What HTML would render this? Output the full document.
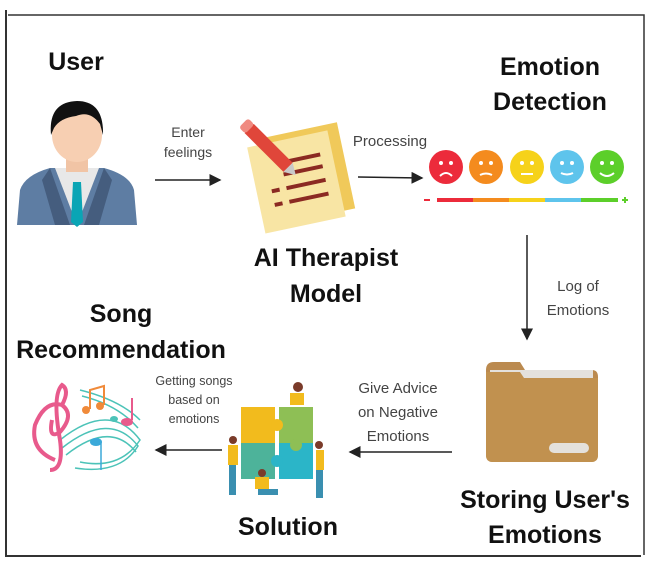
<!DOCTYPE html>
<html><head><meta charset="utf-8"><style>
body{margin:0;background:#fff;width:649px;height:567px;overflow:hidden;position:relative;font-family:"Liberation Sans",sans-serif}
.t{position:absolute;font-weight:bold;font-size:25px;color:#111;text-align:center;white-space:nowrap;line-height:1}
.s{position:absolute;font-size:14px;color:#444;text-align:center;white-space:nowrap;line-height:1.45}
</style></head><body>
<svg width="649" height="567" style="position:absolute;left:0;top:0">
<defs><marker id="a" markerWidth="8" markerHeight="8" refX="7" refY="4" orient="auto"><path d="M0,0 L8,4 L0,8z" fill="#222"/></marker></defs>
<path d="M6,10 V556 H641" stroke="#333" stroke-width="2" fill="none"/>
<path d="M8,15 H644 V555" stroke="#333" stroke-width="1.5" fill="none"/>
<line x1="155" y1="180" x2="220" y2="180" stroke="#222" stroke-width="1.5" marker-end="url(#a)"/>
<line x1="358" y1="177" x2="422" y2="178" stroke="#222" stroke-width="1.5" marker-end="url(#a)"/>
<line x1="527" y1="235" x2="527" y2="339" stroke="#222" stroke-width="1.5" marker-end="url(#a)"/>
<line x1="452" y1="452" x2="350" y2="452" stroke="#222" stroke-width="1.5" marker-end="url(#a)"/>
<line x1="222" y1="450" x2="156" y2="450" stroke="#222" stroke-width="1.5" marker-end="url(#a)"/>
<path d="M17,225 L20,190 Q25,175 50,168 L104,168 Q130,175 134,190 L137,225Z" fill="#5e7da3"/>
<path d="M55,168 L77,225 L99,168Z" fill="#e8e8e8"/>
<path d="M50,168 L70,225 L55,225 L42,180Z M104,168 L84,225 L99,225 L112,180Z" fill="#455d7e"/>
<path d="M73,182 L81,182 L83,222 L77,227 L71,222Z" fill="#0aa5b5"/>
<rect x="66" y="150" width="22" height="22" fill="#f1c4a5"/>
<ellipse cx="77" cy="135" rx="25" ry="27" fill="#f7cfb2"/>
<path d="M51,135 Q48,102 77,101 Q104,101 103,135 L100,124 Q90,110 76,116 Q60,118 54,128Z" fill="#111"/>
<g transform="rotate(-12 296 180)">
<rect x="268" y="132" width="80" height="88" fill="#f0c95a"/>
<rect x="255" y="138" width="82" height="88" fill="#f8e5a4"/>
<g stroke="#8b2a22" stroke-width="4"><line x1="285" y1="160" x2="325" y2="160"/><line x1="285" y1="172" x2="325" y2="172"/><line x1="270" y1="186" x2="278" y2="186"/><line x1="285" y1="186" x2="325" y2="186"/><line x1="270" y1="200" x2="278" y2="200"/><line x1="285" y1="200" x2="325" y2="200"/></g>
</g>
<g transform="rotate(45 270 150)"><rect x="240" y="143" width="55" height="13" fill="#e0463a"/><rect x="232" y="143" width="9" height="13" rx="3" fill="#f08a80"/><path d="M295,143 L306,149.5 L295,156Z" fill="#c9c9c9"/></g>
<g>
<circle cx="446" cy="167" r="17" fill="#ec2b3b"/><circle cx="486" cy="167" r="17" fill="#f48b1e"/><circle cx="527" cy="167" r="17" fill="#f6d21a"/><circle cx="567" cy="167" r="17" fill="#5ec4ec"/><circle cx="607" cy="167" r="17" fill="#5ccf2a"/>
<g fill="#fff"><circle cx="441" cy="163" r="2"/><circle cx="451" cy="163" r="2"/><circle cx="481" cy="163" r="2"/><circle cx="491" cy="163" r="2"/><circle cx="522" cy="163" r="2"/><circle cx="532" cy="163" r="2"/><circle cx="562" cy="163" r="2"/><circle cx="572" cy="163" r="2"/><circle cx="602" cy="163" r="2"/><circle cx="612" cy="163" r="2"/></g>
<g stroke="#fff" stroke-width="2" fill="none"><path d="M440,176 Q446,170 452,176"/><path d="M480,175 Q486,172 492,175"/><path d="M521,174 H533"/><path d="M561,173 Q567,176 573,173"/><path d="M600,173 Q607,179 614,173"/></g>
<rect x="437" y="198" width="36" height="4" fill="#ec2b3b"/><rect x="473" y="198" width="36" height="4" fill="#f48b1e"/><rect x="509" y="198" width="36" height="4" fill="#f6d21a"/><rect x="545" y="198" width="36" height="4" fill="#5ec4ec"/><rect x="581" y="198" width="37" height="4" fill="#5ccf2a"/>
<rect x="424" y="199" width="6" height="2" fill="#ec2b3b"/><path d="M622,200 h6 M625,197 v6" stroke="#5ccf2a" stroke-width="2"/>
</g>
<path d="M486,370 Q486,362 494,362 L520,362 L525,370 L592,370 Q598,370 598,377 L598,455 Q598,462 591,462 L493,462 Q486,462 486,455Z" fill="#bb8a4f"/>
<rect x="490" y="370" width="103" height="8" fill="#e4e1dc"/>
<path d="M524,378 L598,378 L598,455 Q598,462 591,462 L493,462 Q486,462 486,455 L486,372 L520,372Z" fill="#c1914f"/>
<rect x="549" y="443" width="40" height="10" rx="5" fill="#e4e1dc"/>
<g fill="none" stroke="#4cc3b8" stroke-width="1.5">
<path d="M60,440 Q110,400 140,440 Q120,470 80,462"/><path d="M62,448 Q110,410 138,446 Q120,475 75,468"/><path d="M66,455 Q110,420 136,452"/><path d="M80,390 Q120,400 140,420"/><path d="M82,396 Q118,405 138,428"/>
</g>
<path d="M55,460 Q30,450 35,425 Q45,400 62,405 Q75,415 60,432 Q48,440 52,420 M62,405 Q70,390 62,385 Q52,395 60,440 Q64,470 50,470" stroke="#e85a8c" stroke-width="4" fill="none"/>
<path d="M90,409 L90,390 L104,386 L104,405" stroke="#f08a3a" stroke-width="2" fill="none"/><circle cx="86" cy="410" r="4" fill="#f08a3a"/><circle cx="100" cy="406" r="4" fill="#f08a3a"/>
<path d="M132,420 L132,398" stroke="#e85a8c" stroke-width="2"/><ellipse cx="127" cy="422" rx="6" ry="4" fill="#e85a8c"/>
<ellipse cx="96" cy="442" rx="6" ry="4" fill="#3ba9d9"/><path d="M101,442 V470" stroke="#3ba9d9" stroke-width="1.5"/>
<ellipse cx="114" cy="419" rx="4" ry="3" fill="#4cc3b8"/>
<rect x="241" y="407" width="34" height="36" fill="#f2bb1d"/><rect x="279" y="407" width="34" height="36" fill="#8ebf55"/>
<rect x="241" y="443" width="34" height="36" fill="#4db39a"/><rect x="279" y="443" width="34" height="36" fill="#2bb5c8"/>
<circle cx="277" cy="425" r="6" fill="#f2bb1d"/><circle cx="296" cy="445" r="6" fill="#8ebf55"/><circle cx="277" cy="461" r="6" fill="#2bb5c8"/>
<g fill="#f2bb1d"><rect x="290" y="393" width="14" height="12"/><rect x="228" y="445" width="10" height="20"/><rect x="316" y="450" width="8" height="20"/><rect x="255" y="477" width="14" height="12"/></g>
<g fill="#3a8fb0"><rect x="229" y="465" width="7" height="30"/><rect x="316" y="470" width="7" height="28"/><rect x="258" y="489" width="20" height="6"/></g>
<g fill="#7a3b2a"><circle cx="298" cy="387" r="5"/><circle cx="233" cy="440" r="4"/><circle cx="319" cy="445" r="4"/><circle cx="262" cy="473" r="4"/></g>
</svg>
<div class="t" style="left:36px;top:50px;width:80px">User</div>
<div class="t" style="left:460px;top:50px;width:180px;line-height:35px">Emotion<br>Detection</div>
<div class="s" style="left:150px;top:122px;width:76px">Enter<br>feelings</div>
<div class="s" style="left:340px;top:131px;width:100px;font-size:15px">Processing</div>
<div class="t" style="left:216px;top:240px;width:220px;line-height:36px">AI Therapist<br>Model</div>
<div class="s" style="left:530px;top:275px;width:96px;font-size:15px;line-height:24px">Log of<br>Emotions</div>
<div class="t" style="left:0px;top:296px;width:242px;line-height:36px">Song<br>Recommendation</div>
<div class="s" style="left:138px;top:372px;width:112px;font-size:12.5px;line-height:19px">Getting songs<br>based on<br>emotions</div>
<div class="s" style="left:340px;top:377px;width:116px;font-size:15px;line-height:24px">Give Advice<br>on Negative<br>Emotions</div>
<div class="t" style="left:218px;top:515px;width:140px">Solution</div>
<div class="t" style="left:440px;top:483px;width:210px;line-height:35px">Storing User's<br>Emotions</div>
</body></html>
